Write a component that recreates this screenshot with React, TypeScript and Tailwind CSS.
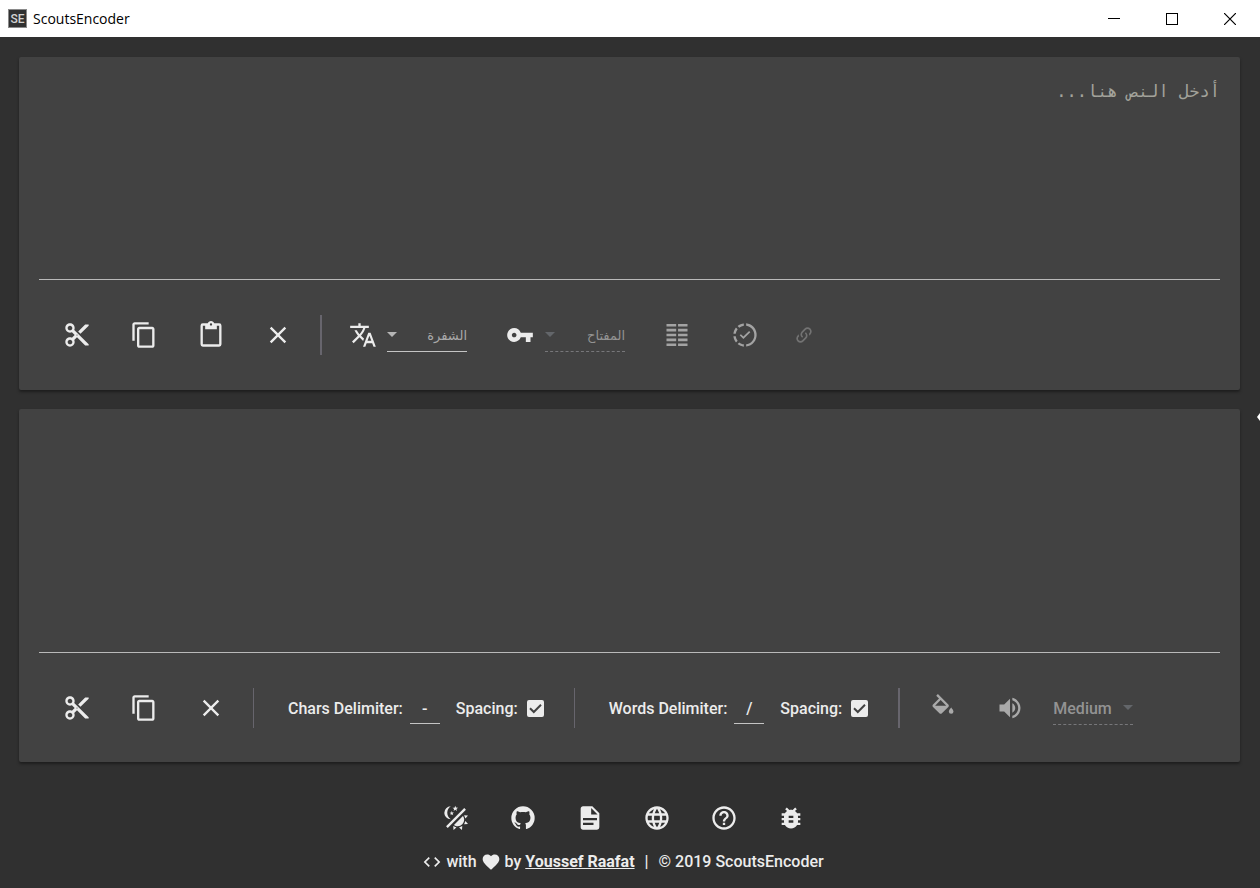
import React from "react";

const paths = {
  cut: "M9.64 7.64c.23-.5.36-1.05.36-1.64 0-2.21-1.79-4-4-4S2 3.79 2 6s1.79 4 4 4c.59 0 1.14-.13 1.64-.36L10 12l-2.36 2.36C7.14 14.13 6.59 14 6 14c-2.21 0-4 1.79-4 4s1.79 4 4 4 4-1.79 4-4c0-.59-.13-1.14-.36-1.64L12 14l7 7h3v-1L9.64 7.64zM6 8c-1.1 0-2-.89-2-2s.9-2 2-2 2 .89 2 2-.9 2-2 2zm0 12c-1.1 0-2-.89-2-2s.9-2 2-2 2 .89 2 2-.9 2-2 2zm6-7.5c-.28 0-.5-.22-.5-.5s.22-.5.5-.5.5.22.5.5-.22.5-.5.5zM19 3l-6 6 2 2 7-7V3z",
  copy: "M16 1H4c-1.1 0-2 .9-2 2v14h2V3h12V1zm3 4H8c-1.1 0-2 .9-2 2v14c0 1.1.9 2 2 2h11c1.1 0 2-.9 2-2V7c0-1.1-.9-2-2-2zm0 16H8V7h11v14z",
  paste: "M19,20H5V4H7V7H17V4H19M12,2A1,1 0 0,1 13,3A1,1 0 0,1 12,4A1,1 0 0,1 11,3A1,1 0 0,1 12,2M19,2H14.82C14.4,.84 13.3,0 12,0C10.7,0 9.6,.84 9.18,2H5A2,2 0 0,0 3,4V20A2,2 0 0,0 5,22H19A2,2 0 0,0 21,20V4A2,2 0 0,0 19,2Z",
  clear: "M19 6.41L17.59 5 12 10.59 6.41 5 5 6.41 10.59 12 5 17.59 6.41 19 12 13.41 17.59 19 19 17.59 13.41 12z",
  translate: "M12.87 15.07l-2.54-2.51.03-.03c1.74-1.94 2.98-4.17 3.71-6.53H17V4h-7V2H8v2H1v1.99h11.17C11.5 7.92 10.44 9.75 9 11.35 8.07 10.32 7.3 9.19 6.69 8h-2c.73 1.63 1.73 3.17 2.98 4.56l-5.09 5.02L4 19l5-5 3.11 3.11.76-2.04zM18.5 10h-2L12 22h2l1.12-3h4.75L21 22h2l-4.5-12zm-2.62 7l1.62-4.33L19.12 17h-3.24z",
  key: "M12.65 10C11.83 7.67 9.61 6 7 6c-3.31 0-6 2.69-6 6s2.69 6 6 6c2.61 0 4.83-1.67 5.65-4H17v4h4v-4h2v-4H12.65zM7 14c-1.1 0-2-.9-2-2s.9-2 2-2 2 .9 2 2-.9 2-2 2z",
  columns: "M3 2.5h8.3v2.2H3zM3 6.7h8.3v2.2H3zM3 10.9h8.3v2.2H3zM3 15.1h8.3v2.2H3zM3 19.3h8.3v2.2H3zM12.9 2.5H21v2.2h-8.1zM12.9 6.7H21v2.2h-8.1zM12.9 10.9H21v2.2h-8.1zM12.9 15.1H21v2.2h-8.1zM12.9 19.3H21v2.2h-8.1z",
  progress: "M13,2.03V2.05L13,4.05C17.39,4.59 20.5,8.58 19.96,12.97C19.5,16.61 16.64,19.5 13,19.93V21.93C18.5,21.38 22.5,16.5 21.95,11C21.5,6.25 17.73,2.5 13,2.03M11,2.06C9.05,2.25 7.19,3 5.67,4.26L7.1,5.74C8.22,4.84 9.57,4.26 11,4.06V2.06M4.26,5.67C3,7.19 2.25,9.04 2.05,11H4.05C4.24,9.58 4.8,8.23 5.69,7.1L4.26,5.67M15.5,8.5L10.62,13.38L8.5,11.26L7.44,12.32L10.62,15.5L16.56,9.56L15.5,8.5M2.06,13C2.26,14.96 3.03,16.81 4.27,18.33L5.69,16.9C4.81,15.77 4.24,14.42 4.06,13H2.06M7.1,18.37L5.67,19.74C7.18,21 9.04,21.79 11,22V20C9.58,19.82 8.23,19.25 7.1,18.37Z",
  link: "M10.59,13.41C11,13.8 11,14.44 10.59,14.83C10.2,15.22 9.56,15.22 9.17,14.83C7.22,12.88 7.22,9.71 9.17,7.76V7.76L12.71,4.22C14.66,2.27 17.83,2.27 19.78,4.22C21.73,6.17 21.73,9.34 19.78,11.29L18.29,12.78C18.3,11.96 18.17,11.14 17.89,10.36L18.36,9.88C19.54,8.71 19.54,6.81 18.36,5.64C17.19,4.46 15.29,4.46 14.12,5.64L10.59,9.17C9.41,10.34 9.41,12.24 10.59,13.41M13.41,9.17C13.8,8.78 14.44,8.78 14.83,9.17C16.78,11.12 16.78,14.29 14.83,16.24V16.24L11.29,19.78C9.34,21.73 6.17,21.73 4.22,19.78C2.27,17.83 2.27,14.66 4.22,12.71L5.71,11.22C5.7,12.04 5.83,12.86 6.11,13.65L5.64,14.12C4.46,15.29 4.46,17.19 5.64,18.36C6.81,19.54 8.71,19.54 9.88,18.36L13.41,14.83C14.59,13.66 14.59,11.76 13.41,10.59C13,10.2 13,9.56 13.41,9.17Z",
  fill: "M19,11.5C19,11.5 17,13.67 17,15A2,2 0 0,0 19,17A2,2 0 0,0 21,15C21,13.67 19,11.5 19,11.5M5.21,10L10,5.21L14.79,10M16.56,8.94L7.62,0L6.21,1.41L8.59,3.79L3.44,8.94C2.85,9.5 2.85,10.47 3.44,11.06L8.94,16.56C9.23,16.85 9.62,17 10,17C10.38,17 10.77,16.85 11.06,16.56L16.56,11.06C17.15,10.47 17.15,9.5 16.56,8.94Z",
  volume: "M14,3.23V5.29C16.89,6.15 19,8.83 19,12C19,15.17 16.89,17.84 14,18.7V20.77C18,19.86 21,16.28 21,12C21,7.72 18,4.14 14,3.23M16.5,12C16.5,10.23 15.5,8.71 14,7.97V16C15.5,15.29 16.5,13.76 16.5,12M3,9V15H7L12,20V4L7,9H3Z",
  theme: "M7.5,2C5.71,3.15 4.5,5.18 4.5,7.5C4.5,9.82 5.71,11.85 7.53,13C4.46,13 2,10.54 2,7.5A5.5,5.5 0 0,1 7.5,2M19.07,3.5L20.5,4.93L4.93,20.5L3.5,19.07L19.07,3.5M12.89,5.93L11.41,5L9.97,6L10.39,4.3L9,3.24L10.75,3.12L11.33,1.47L12,3.1L13.73,3.13L12.38,4.26L12.89,5.93M9.59,9.54L8.43,8.81L7.31,9.59L7.65,8.27L6.56,7.44L7.92,7.35L8.37,6.06L8.88,7.33L10.24,7.36L9.19,8.23L9.59,9.54M19,13.5A5.5,5.5 0 0,1 13.5,19C12.28,19 11.15,18.6 10.24,17.93L17.93,10.24C18.6,11.15 19,12.28 19,13.5M14.6,20.08L17.37,18.93L17.13,22.28L14.6,20.08M18.93,17.38L20.08,14.61L22.28,17.15L18.93,17.38M20.08,12.42L18.94,9.64L22.28,9.88L20.08,12.42M9.63,18.93L12.4,20.08L9.87,22.27L9.63,18.93Z",
  github: "M12,2A10,10 0 0,0 2,12C2,16.42 4.87,20.17 8.84,21.5C9.34,21.58 9.5,21.27 9.5,21C9.5,20.77 9.5,20.14 9.5,19.31C6.73,19.91 6.14,17.97 6.14,17.97C5.68,16.81 5.03,16.5 5.03,16.5C4.12,15.88 5.1,15.9 5.1,15.9C6.1,15.97 6.63,16.93 6.63,16.93C7.5,18.45 8.97,18 9.54,17.76C9.63,17.11 9.89,16.67 10.17,16.42C7.95,16.17 5.62,15.31 5.62,11.5C5.62,10.39 6,9.5 6.65,8.79C6.55,8.54 6.2,7.5 6.75,6.15C6.75,6.15 7.59,5.88 9.5,7.17C10.29,6.95 11.15,6.84 12,6.84C12.85,6.84 13.71,6.95 14.5,7.17C16.41,5.88 17.25,6.15 17.25,6.15C17.8,7.5 17.45,8.54 17.35,8.79C18,9.5 18.38,10.39 18.38,11.5C18.38,15.32 16.04,16.16 13.81,16.41C14.17,16.72 14.5,17.33 14.5,18.26C14.5,19.6 14.5,20.68 14.5,21C14.5,21.27 14.66,21.59 15.17,21.5C19.14,20.16 22,16.42 22,12A10,10 0 0,0 12,2Z",
  file: "M13,9H18.5L13,3.5V9M6,2H14L20,8V20A2,2 0 0,1 18,22H6C4.89,22 4,21.1 4,20V4C4,2.89 4.89,2 6,2M15,18V16H6V18H15M18,14V12H6V14H18Z",
  globe: "M11.99 2C6.47 2 2 6.48 2 12s4.47 10 9.99 10C17.52 22 22 17.52 22 12S17.52 2 11.99 2zm6.93 6h-2.95c-.32-1.25-.78-2.45-1.38-3.56 1.84.63 3.37 1.91 4.33 3.56zM12 4.04c.83 1.2 1.48 2.53 1.91 3.96h-3.82c.43-1.43 1.08-2.76 1.91-3.96zM4.26 14C4.1 13.36 4 12.69 4 12s.1-1.36.26-2h3.38c-.08.66-.14 1.32-.14 2 0 .68.06 1.34.14 2H4.26zm.82 2h2.95c.32 1.25.78 2.45 1.38 3.56-1.84-.63-3.37-1.9-4.33-3.56zm2.95-8H5.08c.96-1.66 2.49-2.93 4.33-3.56C8.81 5.55 8.35 6.75 8.03 8zM12 19.96c-.83-1.2-1.48-2.53-1.91-3.96h3.82c-.43 1.43-1.08 2.76-1.91 3.96zM14.34 14H9.66c-.09-.66-.16-1.32-.16-2 0-.68.07-1.35.16-2h4.68c.09.65.16 1.32.16 2 0 .68-.07 1.34-.16 2zm.25 5.56c.6-1.11 1.06-2.31 1.38-3.56h2.95c-.96 1.65-2.49 2.93-4.33 3.56zM16.36 14c.08-.66.14-1.32.14-2 0-.68-.06-1.34-.14-2h3.38c.16.64.26 1.31.26 2s-.1 1.36-.26 2h-3.38z",
  help: "M11 18h2v-2h-2v2zm1-16C6.48 2 2 6.48 2 12s4.48 10 10 10 10-4.48 10-10S17.52 2 12 2zm0 18c-4.41 0-8-3.59-8-8s3.59-8 8-8 8 3.59 8 8-3.59 8-8 8zm0-14c-2.21 0-4 1.79-4 4h2c0-1.1.9-2 2-2s2 .9 2 2c0 2-3 1.75-3 5h2c0-2.25 3-2.5 3-5 0-2.21-1.79-4-4-4z",
  bug: "M20 8h-2.81c-.45-.78-1.07-1.45-1.82-1.96L17 4.41 15.59 3l-2.17 2.17C12.96 5.06 12.49 5 12 5c-.49 0-.96.06-1.41.17L8.41 3 7 4.41l1.62 1.63C7.88 6.55 7.26 7.22 6.81 8H4v2h2.09c-.05.33-.09.66-.09 1v1H4v2h2v1c0 .34.04.67.09 1H4v2h2.81c1.04 1.79 2.97 3 5.19 3s4.15-1.21 5.19-3H20v-2h-2.09c.05-.33.09-.66.09-1v-1h2v-2h-2v-1c0-.34-.04-.67-.09-1H20V8zm-6 8h-4v-2h4v2zm0-4h-4v-2h4v2z",
  code: "M9.4 16.6L4.8 12l4.6-4.6L8 6l-6 6 6 6 1.4-1.4zm5.2 0l4.6-4.6-4.6-4.6L16 6l6 6-6 6-1.4-1.4z",
  heart: "M12 21.35l-1.45-1.32C5.4 15.36 2 12.28 2 8.5 2 5.42 4.42 3 7.5 3c1.74 0 3.41.81 4.5 2.09C13.09 3.81 14.76 3 16.5 3 19.58 3 22 5.42 22 8.5c0 3.78-3.4 6.86-8.55 11.54L12 21.35z",
};

type IconName = keyof typeof paths;

function Icon({ name, className = "size-7" }: { name: IconName; className?: string }) {
  return (
    <svg viewBox="0 0 24 24" fill="currentColor" aria-hidden="true" className={`shrink-0 ${className}`}>
      <path d={paths[name]} />
    </svg>
  );
}

function IconButton({
  name,
  label,
  disabled,
  iconClass,
  className = "text-[#ececec]",
}: {
  name: IconName;
  label: string;
  disabled?: boolean;
  iconClass?: string;
  className?: string;
}) {
  return (
    <button
      type="button"
      aria-label={label}
      disabled={disabled}
      className={`flex size-12 shrink-0 items-center justify-center rounded-full ${className}`}
    >
      <Icon name={name} className={iconClass} />
    </button>
  );
}

function Divider({ className = "w-px" }: { className?: string }) {
  return <div className={`h-10 shrink-0 bg-[#67656d] ${className}`} />;
}

function Dropdown({
  label,
  option,
  rtl,
  disabled,
}: {
  label: string;
  option: string;
  rtl?: boolean;
  disabled?: boolean;
}) {
  return (
    <div
      className={`relative flex h-[34px] w-20 shrink-0 items-center border-b ${
        disabled ? "border-dashed border-[#77777a] text-[#939393]" : "border-[#c4c4c4] text-[#a9a9a9]"
      }`}
    >
      <select
        aria-label={label}
        dir={rtl ? "rtl" : "ltr"}
        disabled={disabled}
        className={`h-full w-full appearance-none bg-transparent pt-0.5 opacity-100 outline-none ${
          rtl ? "text-[13px]" : "text-base font-medium"
        }`}
      >
        <option>{option}</option>
      </select>
      <svg
        viewBox="0 0 10 5"
        aria-hidden="true"
        className={`pointer-events-none absolute h-[5px] w-[10px] ${rtl ? "left-0" : "right-0"} ${
          disabled ? "text-[#63666a]" : "text-[#b5b5b5]"
        }`}
      >
        <path d="M0 0h10L5 5z" fill="currentColor" />
      </svg>
    </div>
  );
}

function Delimiter({ id, label, value }: { id: string; label: string; value: string }) {
  return (
    <div className="flex shrink-0 items-center">
      <label htmlFor={id} className="pt-0.5 whitespace-nowrap">
        {label}
      </label>
      <input
        id={id}
        defaultValue={value}
        className="ml-[7px] h-8 w-[30px] border-b border-[#c4c4c4] bg-transparent pt-0.5 text-center outline-none"
      />
      <label className="ml-4 flex items-center gap-[9px] whitespace-nowrap">
        <span className="pt-0.5">Spacing:</span>
        <span className="relative flex size-[17px]">
          <input
            type="checkbox"
            defaultChecked
            className="peer size-[17px] appearance-none rounded-xs border-2 border-[#ececec] checked:bg-[#ececec]"
          />
          <svg
            viewBox="0 0 17 17"
            aria-hidden="true"
            className="pointer-events-none absolute inset-0 hidden size-[17px] peer-checked:block"
          >
            <path d="M3 8.2l3.8 3.8L14 4.8" fill="none" stroke="#424242" strokeWidth="2" />
          </svg>
        </span>
      </label>
    </div>
  );
}

const card = "rounded-xs bg-[#424242] shadow-[0_2px_3px_rgba(0,0,0,0.4)]";
const editor =
  "block w-full resize-none border-b border-[#b9b9b9] bg-transparent pt-[22px] font-['DejaVu_Sans_Mono',monospace] text-[17px] leading-6 text-[#ececec] outline-none placeholder:text-[#a3a39b]";

export default function App() {
  return (
    <div className="flex min-h-screen flex-col bg-[#303030] font-[Roboto,'DejaVu_Sans',sans-serif] text-base font-medium text-[#ececec]">
      <header className="flex h-[37px] shrink-0 items-center bg-white pr-px pl-2 text-black">
        <div className="flex size-[19px] items-center justify-center border border-[#8a8a8a] bg-[#303030] text-[12px] leading-none text-[#d0d0d0]">
          SE
        </div>
        <h1 className="ml-[6px] font-['Open_Sans',sans-serif] text-sm font-normal">ScoutsEncoder</h1>
        <div className="ml-auto flex h-full">
          <button type="button" aria-label="Minimize" className="flex w-[58px] items-center justify-center">
            <svg viewBox="0 0 12 12" className="size-3" shapeRendering="crispEdges">
              <path d="M0 5.5h12" stroke="black" />
            </svg>
          </button>
          <button type="button" aria-label="Maximize" className="flex w-[58px] items-center justify-center">
            <svg viewBox="0 0 12 12" className="size-3" shapeRendering="crispEdges">
              <path d="M.5.5h11v11H.5z" fill="none" stroke="black" />
            </svg>
          </button>
          <button type="button" aria-label="Close" className="flex w-[58px] items-center justify-center">
            <svg viewBox="0 0 12 12" className="size-3">
              <path d="M0 0l12 12M12 0L0 12" stroke="black" strokeWidth="1.2" />
            </svg>
          </button>
        </div>
      </header>

      <main className="relative flex flex-col gap-[19px] px-5 pt-5 pl-[19px]">
        <section className={card}>
          <div className="px-5">
            <textarea dir="rtl" aria-label="النص" placeholder="أدخل النص هنا..." className={`h-[223px] ${editor}`} />
          </div>
          <div className="flex items-center py-[31px] pl-[34px]">
            <div className="flex gap-[19px]">
              <IconButton name="cut" label="Cut" />
              <IconButton name="copy" label="Copy" />
              <IconButton name="paste" label="Paste" />
              <IconButton name="clear" label="Clear" />
            </div>
            <div className="ml-[18px] flex">
              <Divider className="w-0.5" />
            </div>
            <div className="ml-[27px] flex items-center gap-[10px]">
              <Icon name="translate" />
              <Dropdown label="الشفرة" option="الشفرة" rtl />
            </div>
            <div className="ml-[39px] flex items-center gap-[11px]">
              <Icon name="key" />
              <Dropdown label="المفتاح" option="المفتاح" rtl disabled />
            </div>
            <div className="ml-7 flex gap-5">
              <IconButton name="columns" label="Table" disabled className="text-[#a3a3a3]" />
              <IconButton name="progress" label="Check" disabled className="text-[#a3a3a3]" />
            </div>
            <div className="ml-[11px] flex">
              <IconButton name="link" label="Link" disabled iconClass="size-5" className="text-[#737373]" />
            </div>
          </div>
        </section>

        <section className={card}>
          <div className="px-5">
            <textarea aria-label="Output" readOnly className={`h-[244px] ${editor}`} />
          </div>
          <div className="flex items-center pt-[31px] pb-[30px] pl-[34px]">
            <div className="flex gap-[19px]">
              <IconButton name="cut" label="Cut output" />
              <IconButton name="copy" label="Copy output" />
              <IconButton name="clear" label="Clear output" />
            </div>
            <div className="ml-[18px] flex items-center gap-[34px]">
              <Divider />
              <Delimiter id="chars" label="Chars Delimiter:" value="-" />
            </div>
            <div className="ml-[30px] flex items-center gap-[34px]">
              <Divider />
              <Delimiter id="words" label="Words Delimiter:" value="/" />
            </div>
            <div className="ml-[30px] flex items-center gap-[19px]">
              <Divider className="w-0.5" />
              <IconButton name="fill" label="Fill colour" disabled className="text-[#a9a9a9]" />
              <IconButton name="volume" label="Play" disabled className="text-[#a9a9a9]" />
              <Dropdown label="Speed" option="Medium" disabled />
            </div>
          </div>
        </section>

        <svg viewBox="0 0 3 8" aria-hidden="true" className="absolute top-[376px] right-0 h-2 w-[3px]">
          <path d="M3 0v8L0 4z" fill="white" />
        </svg>
      </main>

      <footer className="flex flex-col items-center pt-8 pr-[14px]">
        <nav className="flex gap-[19px]">
          <IconButton name="theme" label="Toggle theme" />
          <IconButton name="github" label="GitHub" />
          <IconButton name="file" label="Release notes" />
          <IconButton name="globe" label="Website" />
          <IconButton name="help" label="Help" />
          <IconButton name="bug" label="Report a bug" />
        </nav>
        <p className="mt-2 flex items-center leading-6">
          <Icon name="code" className="size-5" />
          <span className="ml-1">with</span>
          <Icon name="heart" className="ml-1 size-5" />
          <span className="ml-1">by</span>
          <a href="#author" className="ml-1 font-bold underline">
            Youssef Raafat
          </a>
          <span className="mx-[10px]">|</span>
          <span>© 2019 ScoutsEncoder</span>
        </p>
      </footer>
    </div>
  );
}
